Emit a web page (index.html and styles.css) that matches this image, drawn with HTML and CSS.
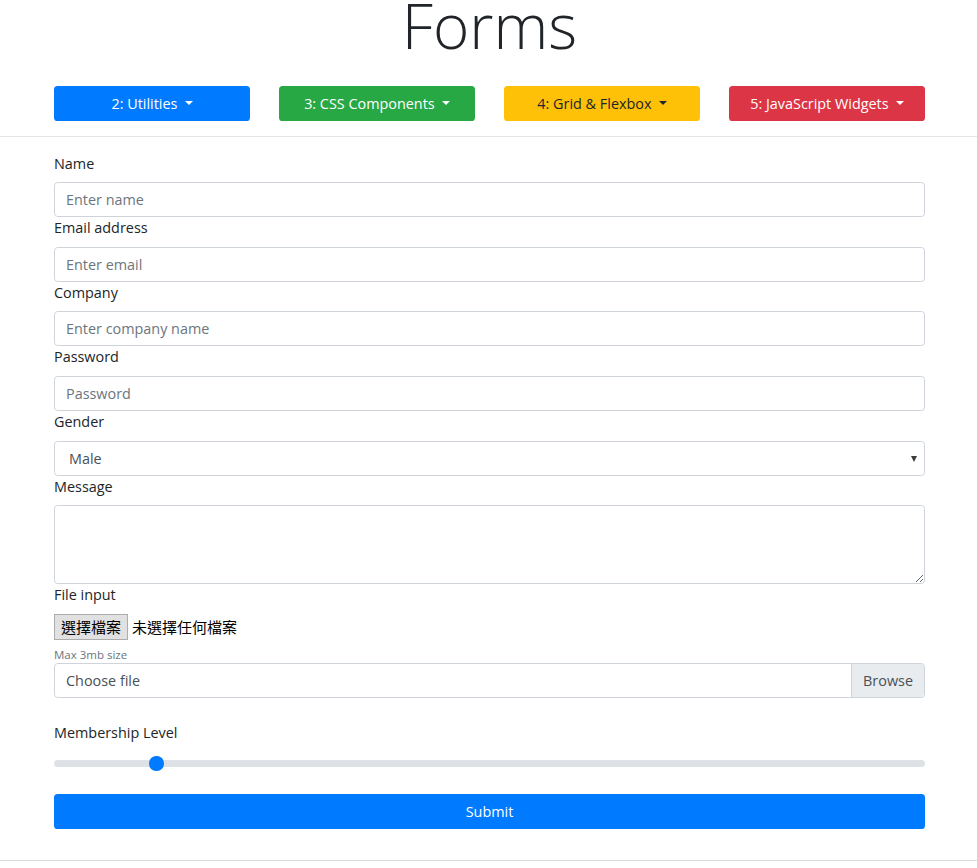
FILE: index.html
```html
<!DOCTYPE html>
<html lang="en">
<head>
<meta charset="utf-8">
<title>Forms</title>
<link rel="stylesheet" href="styles.css">
</head>
<body>
<header class="top">
  <h1 class="title">Forms</h1>
  <nav class="menu">
    <button class="btn btn-blue" type="button">2: Utilities<span class="caret"></span></button>
    <button class="btn btn-green" type="button">3: CSS Components<span class="caret"></span></button>
    <button class="btn btn-yellow" type="button">4: Grid &amp; Flexbox<span class="caret"></span></button>
    <button class="btn btn-red" type="button">5: JavaScript Widgets<span class="caret"></span></button>
  </nav>
</header>
<main class="page">
  <form class="form">
    <label class="label" for="name">Name</label>
    <input class="field" id="name" type="text" placeholder="Enter name">
    <label class="label" for="email">Email address</label>
    <input class="field" id="email" type="email" placeholder="Enter email">
    <label class="label" for="company">Company</label>
    <input class="field" id="company" type="text" placeholder="Enter company name">
    <label class="label" for="password">Password</label>
    <input class="field" id="password" type="password" placeholder="Password">
    <label class="label" for="gender">Gender</label>
    <div class="select-wrap">
      <select class="field select" id="gender">
        <option>Male</option>
        <option>Female</option>
      </select>
      <span class="select-arrow"></span>
    </div>
    <label class="label" for="message">Message</label>
    <textarea class="field area" id="message" rows="3"></textarea>
    <label class="label label-file">File input</label>
    <div class="file-native">
      <span class="file-btn">選擇檔案</span><span class="file-none">未選擇任何檔案</span>
    </div>
    <small class="hint">Max 3mb size</small>
    <div class="custom-file">
      <span class="custom-file-text">Choose file</span>
      <span class="custom-file-browse">Browse</span>
    </div>
    <label class="label label-range" for="level">Membership Level</label>
    <input class="range" id="level" type="range" min="1" max="10" value="2">
    <button class="submit" type="button">Submit</button>
  </form>
</main>
</body>
</html>
```
FILE: styles.css
```css
* { box-sizing: border-box; }
html, body { margin: 0; padding: 0; background: #fff; }
body {
  font-family: "Open Sans", "Noto Sans", sans-serif;
  font-size: 14.4px;
  line-height: 1.5;
  color: #212529;
}
.top {
  border-bottom: 1px solid #e5e5e5;
  padding: 0 52px 15px 54px;
}
.title {
  margin: 0;
  font-weight: 300;
  font-size: 62px;
  line-height: 50px;
  height: 86px;
  text-align: center;
  color: #212529;
  padding-top: 0;
}
.menu {
  display: flex;
  gap: 29px;
}
.btn {
  flex: 1;
  height: 35px;
  border: 1px solid transparent;
  border-radius: 3.6px;
  font-family: inherit;
  font-size: 14.4px;
  color: #fff;
  padding: 0 10px;
  cursor: pointer;
}
.btn-blue { background: #007bff; }
.btn-green { background: #28a745; }
.btn-yellow { background: #ffc107; color: #212529; }
.btn-red { background: #dc3545; }
.caret {
  display: inline-block;
  margin-left: 0.5em;
  vertical-align: 0.255em;
  border-top: 0.3em solid;
  border-right: 0.3em solid transparent;
  border-left: 0.3em solid transparent;
}
.page {
  border-bottom: 1px solid #dcdcdc;
  padding: 15.6px 52px 31px 54px;
}
.form {
  display: flex;
  flex-direction: column;
}
.label {
  display: block;
  line-height: 21.6px;
  margin-bottom: 8px;
}
.field {
  display: block;
  width: 100%;
  height: 35px;
  padding: 0 11px;
  font-family: inherit;
  font-size: 14.4px;
  color: #495057;
  background: #fff;
  border: 1px solid #ced4da;
  border-radius: 3.6px;
  outline: none;
}
.field::placeholder { color: #6c757d; opacity: 1; }
.select-wrap { position: relative; }
.select {
  appearance: none;
  -webkit-appearance: none;
  padding-left: 14px;
}
.select-arrow {
  position: absolute;
  right: 8px;
  top: 15px;
  border-top: 6px solid #3c3c3c;
  border-left: 3.5px solid transparent;
  border-right: 3.5px solid transparent;
}
.area {
  height: 78.6px;
  resize: vertical;
  padding: 6px 11px;
}
.label-file { margin-top: 0; margin-bottom: 9px; }
.file-native {
  display: flex;
  align-items: center;
  height: 26px;
  font-family: "Noto Sans CJK TC", "Noto Sans CJK SC", sans-serif;
  font-size: 15px;
  color: #000;
}
.file-btn {
  display: inline-flex;
  align-items: center;
  height: 26px;
  padding: 0 6px;
  background: #e1e1e1;
  border: 1px solid #adadad;
  margin-right: 4px;
}
.hint {
  display: block;
  font-size: 11.5px;
  line-height: 17px;
  color: #6c757d;
  margin-top: 6px;
  margin-bottom: 0;
}
.custom-file {
  display: flex;
  height: 35px;
  border: 1px solid #ced4da;
  border-radius: 3.6px;
  overflow: hidden;
  color: #495057;
}
.custom-file-text {
  flex: 1;
  display: flex;
  align-items: center;
  padding: 0 11px;
}
.custom-file-browse {
  display: flex;
  align-items: center;
  padding: 0 11px;
  background: #e9ecef;
  border-left: 1px solid #ced4da;
}
.label-range { margin-top: 23.6px; }
.range {
  -webkit-appearance: none;
  appearance: none;
  width: 100%;
  height: 20px;
  margin: 2px 0 0;
  padding: 0;
  background: transparent;
}
.range:focus { outline: none; }
.range::-webkit-slider-runnable-track {
  height: 7.2px;
  background: #dee2e6;
  border-radius: 7.2px;
}
.range::-webkit-slider-thumb {
  -webkit-appearance: none;
  width: 14.4px;
  height: 14.4px;
  margin-top: -3.6px;
  border-radius: 50%;
  background: #007bff;
  border: 0;
}
.submit {
  margin-top: 20px;
  height: 35px;
  width: 100%;
  border: 1px solid transparent;
  border-radius: 3.6px;
  background: #007bff;
  color: #fff;
  font-family: inherit;
  font-size: 14.4px;
  cursor: pointer;
}
```
